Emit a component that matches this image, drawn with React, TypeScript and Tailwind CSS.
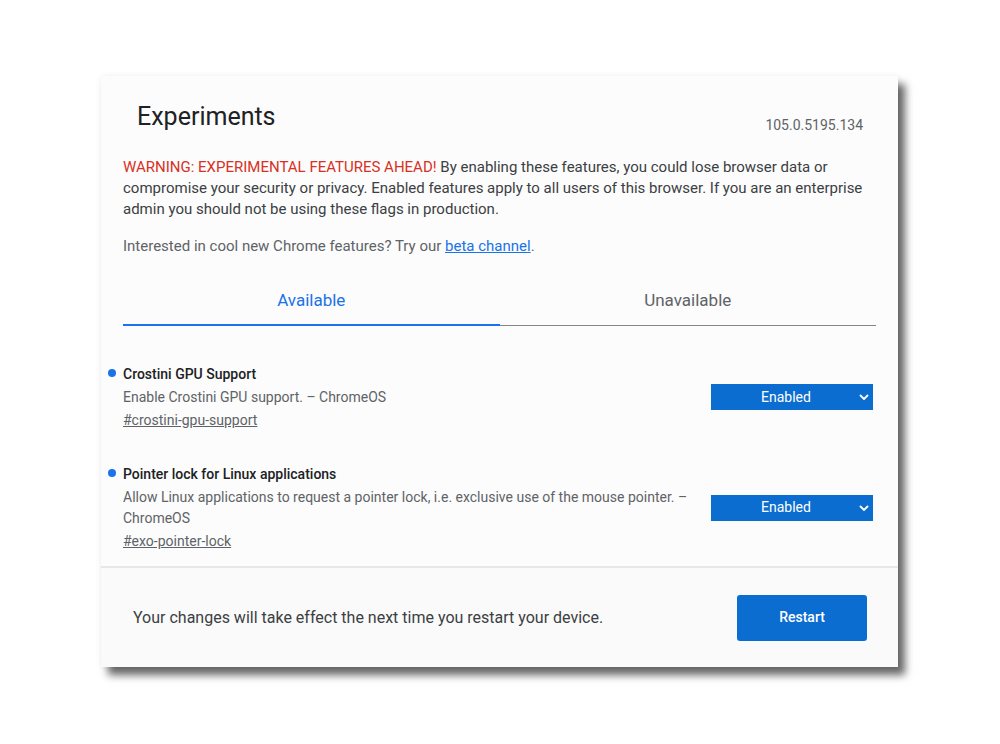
import React from 'react';

const flags = [
  {
    name: 'Crostini GPU Support',
    desc: 'Enable Crostini GPU support. – ChromeOS',
    link: '#crostini-gpu-support',
  },
  {
    name: 'Pointer lock for Linux applications',
    desc: 'Allow Linux applications to request a pointer lock, i.e. exclusive use of the mouse pointer. – ChromeOS',
    link: '#exo-pointer-lock',
  },
];

const Chevron = () => (
  <svg width="10" height="10" viewBox="0 0 10 10" fill="none" stroke="white" strokeWidth="1.8" strokeLinecap="round" strokeLinejoin="round">
    <polyline points="1.5 3.5 5 7 8.5 3.5" />
  </svg>
);

export default function App() {
  return (
    <div className="w-[1000px] h-[744px] bg-white pt-[76px] pl-[101px] font-['Roboto','Liberation_Sans',sans-serif]">
      <div className="w-[797px] h-[591px] flex flex-col bg-[#fbfcfb] shadow-[7px_8px_8px_rgba(0,0,0,0.6),0_0_6px_rgba(0,0,0,0.06)]">
        <div className="flex justify-between items-start pl-[36px] pr-[35px] pt-[25px]">
          <h1 className="text-[25px] leading-[32px] text-[#202124]">Experiments</h1>
          <span className="mt-[14px] text-[14px] leading-[20px] text-[#5f6368]">105.0.5195.134</span>
        </div>

        <div className="px-[22px]">
          <p className="mt-[22px] text-[15px] leading-[21px] text-[#3c4043]">
            <span className="text-[#d93025]">WARNING: EXPERIMENTAL FEATURES AHEAD!</span> By enabling these features, you could lose browser data or compromise your security or privacy. Enabled features apply to all users of this browser. If you are an enterprise admin you should not be using these flags in production.
          </p>
          <p className="mt-[16px] text-[15px] leading-[21px] text-[#5f6368]">
            Interested in cool new Chrome features? Try our{' '}
            <a className="text-[#1a73e8] underline">beta channel</a>.
          </p>

          <div className="mt-[31px] flex items-end">
            <div className="flex-1 text-center pb-[12px] border-b-2 border-[#1a73e8] text-[17px] leading-[24px] text-[#1a73e8]">
              Available
            </div>
            <div className="flex-1 text-center pb-[13px] border-b border-[#80868b] text-[17px] leading-[24px] text-[#5f6368]">
              Unavailable
            </div>
          </div>
        </div>

        <div className="mt-[38px] flex flex-col gap-[34px] pl-[7px] pr-[25px]">
          {flags.map((f) => (
            <div key={f.name} className="flex items-center">
              <div className="w-[595px] flex">
                <div className="w-[8px] h-[8px] mt-[5px] rounded-full bg-[#1a73e8] shrink-0" />
                <div className="ml-[7px] flex flex-col">
                  <div className="text-[14px] leading-[20px] font-medium text-[#202124]">{f.name}</div>
                  <div className="mt-[2.5px] text-[14px] leading-[21px] text-[#5f6368]">{f.desc}</div>
                  <a className="mt-[2.5px] text-[14px] leading-[20px] text-[#5f6368] underline">{f.link}</a>
                </div>
              </div>
              <div className="ml-auto w-[162px] h-[26px] flex items-center bg-[#0b6dd0] text-white text-[14px]">
                <span className="flex-1 text-center pl-[2px]">Enabled</span>
                <span className="pr-[4px]">
                  <Chevron />
                </span>
              </div>
            </div>
          ))}
        </div>

        <div className="mt-auto h-[101px] border-t-2 border-[#e6e7e6] bg-[#f9faf9] flex items-center justify-between pl-[32px] pr-[31px]">
          <span className="text-[16px] text-[#3c4043]">Your changes will take effect the next time you restart your device.</span>
          <button className="w-[130px] h-[46px] rounded-[3px] bg-[#0b6dd0] text-white text-[14px] font-medium">Restart</button>
        </div>
      </div>
    </div>
  );
}
